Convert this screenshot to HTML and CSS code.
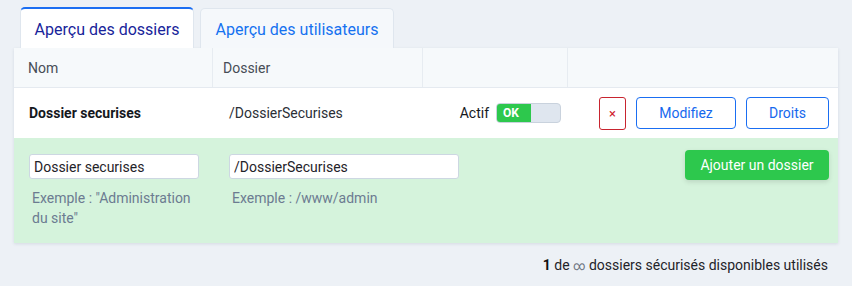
FILE: index.html
```html
<!DOCTYPE html>
<html lang="fr">
<head>
<meta charset="utf-8">
<title>Dossiers sécurisés</title>
<link rel="stylesheet" href="styles.css">
</head>
<body>
<div class="wrap">
  <div class="tabs">
    <div class="tab tab-active">Aperçu des dossiers</div>
    <div class="tab">Aperçu des utilisateurs</div>
  </div>
  <div class="panel">
    <div class="grid thead">
      <div class="cell">Nom</div>
      <div class="cell">Dossier</div>
      <div class="cell"></div>
      <div class="cell last"></div>
    </div>
    <div class="grid trow">
      <div class="cell name">Dossier securises</div>
      <div class="cell path">/DossierSecurises</div>
      <div class="cell status">
        <span class="status-label">Actif</span>
        <span class="toggle"><span class="toggle-on">OK</span><span class="toggle-off"></span></span>
      </div>
      <div class="cell actions">
        <button class="btn btn-del">×</button>
        <button class="btn btn-outline btn-mod">Modifiez</button>
        <button class="btn btn-outline btn-rights">Droits</button>
      </div>
    </div>
    <div class="form">
      <div class="field field-name">
        <input class="input" type="text" value="Dossier securises">
        <div class="hint">Exemple : "Administration du site"</div>
      </div>
      <div class="field field-path">
        <input class="input" type="text" value="/DossierSecurises">
        <div class="hint">Exemple : /www/admin</div>
      </div>
      <button class="btn btn-add">Ajouter un dossier</button>
    </div>
  </div>
  <div class="footer"><b>1</b> de <span class="inf">∞</span> dossiers sécurisés disponibles utilisés</div>
</div>
</body>
</html>
```

FILE: styles.css
```css
* { box-sizing: border-box; }
html, body { margin: 0; padding: 0; }
body {
  background: #edf1f6;
  font-family: Roboto, "Liberation Sans", Arial, sans-serif;
  font-size: 14px;
  color: #1f2329;
}
.wrap { padding: 7px 14px 0 14px; }

.tabs { display: flex; align-items: flex-end; gap: 6px; margin-left: 6px; }
.tab {
  height: 40px;
  padding: 2px 0 0 0;
  display: flex;
  align-items: center;
  justify-content: center;
  white-space: nowrap;
  font-size: 16px;
  color: #1572f0;
  background: #f5f8fb;
  border: 1px solid #dfe6ee;
  border-bottom: none;
  border-radius: 5px 5px 0 0;
  width: 194px;
}
.tab-active {
  height: 41px;
  width: 174px;
  background: #fff;
  color: #18249a;
  border-top: 2px solid #1b6ef2;
}

.panel {
  background: #fff;
  box-shadow: 0 1px 3px rgba(40, 60, 90, 0.12);
}
.grid { display: grid; grid-template-columns: 199px 210px 145px 1fr; }
.thead { height: 40px; background: #f6f9fb; border-bottom: 1px solid #e5eaf0; color: #474d56; }
.thead .cell { display: flex; align-items: center; padding-left: 14px; border-right: 1px solid #e7ecf1; }
.thead .cell:nth-child(2) { padding-left: 10px; }
.thead .cell.last { border-right: none; }

.trow { height: 50px; }
.trow .cell { display: flex; align-items: center; }
.name { font-weight: 700; padding-left: 15px; color: #15181d; }
.path { padding-left: 16px; color: #2b2f36; }
.status { justify-content: flex-end; padding-right: 7px; gap: 7px; }
.status-label { color: #15181d; }
.toggle {
  display: flex;
  width: 65px;
  height: 20px;
  border-radius: 4px;
  overflow: hidden;
  border: 1px solid #c9d2dd;
  background: #dfe6ef;
}
.toggle-on {
  width: 35px;
  background: #2dc84d;
  color: #fff;
  font-weight: 700;
  font-size: 12px;
  display: flex;
  align-items: center;
  padding-left: 7px;
  margin: -1px 0 -1px -1px;
  border-radius: 4px 0 0 4px;
}
.toggle-off { flex: 1; }

.actions { justify-content: flex-end; padding-right: 9px; gap: 10px; }
.btn {
  font-family: inherit;
  font-size: 14px;
  cursor: pointer;
  border-radius: 4px;
  background: #fff;
  height: 32px;
  padding: 0;
}
.btn-del {
  width: 27px;
  height: 33px;
  border: 1px solid #c8242f;
  color: #d0212e;
  font-size: 13px;
  border-radius: 3px;
}
.btn-outline { border: 1px solid #1a6ef2; color: #1668ee; }
.btn-mod { width: 100px; }
.btn-rights { width: 83px; }

.form {
  background: #d5f3dc;
  display: flex;
  align-items: flex-start;
  padding: 16px 9px 15px 15px;
}
.field-name { width: 170px; }
.field-path { width: 230px; margin-left: 30px; }
.input {
  display: block;
  width: 100%;
  height: 25px;
  border: 1px solid #cdd7e2;
  border-radius: 3px;
  background: #fff;
  font-family: inherit;
  font-size: 14px;
  color: #1f2329;
  padding: 0 4px;
}
.hint {
  margin-top: 9px;
  color: #6c7b91;
  line-height: 20px;
  padding-left: 3px;
}
.btn-add {
  margin-left: auto;
  margin-top: -4px;
  width: 144px;
  height: 30px;
  background: #2dc84d;
  color: #fff;
  border: none;
  box-shadow: 0 2px 5px rgba(0, 0, 0, 0.12);
}

.footer {
  text-align: right;
  padding-right: 10px;
  margin-top: 12px;
  line-height: 20px;
  color: #1f2329;
}
.footer b { color: #111; }
.inf { color: #6b7380; font-size: 12px; }
```
